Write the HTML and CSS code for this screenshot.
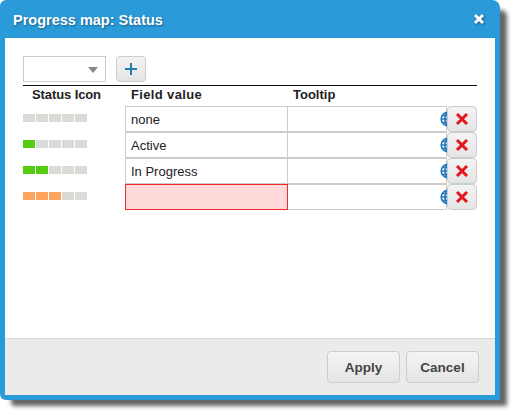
FILE: index.html
```html
<!DOCTYPE html>
<html>
<head>
<meta charset="utf-8">
<title>Progress map</title>
<link rel="stylesheet" href="styles.css">
</head>
<body>
<div class="dialog">
  <header class="titlebar">
    <span class="title">Progress map: Status</span>
    <svg class="close" width="12" height="12" viewBox="0 0 12 12"><path d="M2 2 10 10M10 2 2 10" stroke="#fff" stroke-width="3"/></svg>
  </header>
  <main class="content">
    <div class="toolbar">
      <div class="select"><span class="arrow"></span></div>
      <button class="btn add"><svg width="14" height="14" viewBox="0 0 14 14"><path d="M7 1V13M1 7H13" stroke="#1f7fb5" stroke-width="2"/></svg></button>
    </div>
    <div class="heads">
      <span class="head-icon">Status Icon</span>
      <span class="head-field">Field value</span>
      <span class="head-tip">Tooltip</span>
    </div>
    <div class="row">
      <div class="bars"><i></i><i></i><i></i><i></i><i></i></div>
      <div class="field">none</div>
      <div class="tip"><svg class="globe" width="16" height="16" viewBox="0 0 16 16"><g fill="none" stroke="#1a78c2" stroke-width="1.6"><circle cx="8" cy="8" r="6.8"/><ellipse cx="8" cy="8" rx="3" ry="6.8"/><path d="M1 8H15M2 4.500H14M2 11.500H14"/></g></svg></div>
      <button class="btn del"><svg width="14" height="14" viewBox="0 0 14 14"><path d="M2 2 12 12M12 2 2 12" stroke="#e8141c" stroke-width="3"/></svg></button>
    </div>
    <div class="row">
      <div class="bars"><i class="g"></i><i></i><i></i><i></i><i></i></div>
      <div class="field">Active</div>
      <div class="tip"><svg class="globe" width="16" height="16" viewBox="0 0 16 16"><g fill="none" stroke="#1a78c2" stroke-width="1.6"><circle cx="8" cy="8" r="6.8"/><ellipse cx="8" cy="8" rx="3" ry="6.8"/><path d="M1 8H15M2 4.500H14M2 11.500H14"/></g></svg></div>
      <button class="btn del"><svg width="14" height="14" viewBox="0 0 14 14"><path d="M2 2 12 12M12 2 2 12" stroke="#e8141c" stroke-width="3"/></svg></button>
    </div>
    <div class="row">
      <div class="bars"><i class="g"></i><i class="g"></i><i></i><i></i><i></i></div>
      <div class="field">In Progress</div>
      <div class="tip"><svg class="globe" width="16" height="16" viewBox="0 0 16 16"><g fill="none" stroke="#1a78c2" stroke-width="1.6"><circle cx="8" cy="8" r="6.8"/><ellipse cx="8" cy="8" rx="3" ry="6.8"/><path d="M1 8H15M2 4.500H14M2 11.500H14"/></g></svg></div>
      <button class="btn del"><svg width="14" height="14" viewBox="0 0 14 14"><path d="M2 2 12 12M12 2 2 12" stroke="#e8141c" stroke-width="3"/></svg></button>
    </div>
    <div class="row">
      <div class="bars"><i class="o"></i><i class="o"></i><i class="o"></i><i></i><i></i></div>
      <div class="field invalid"></div>
      <div class="tip"><svg class="globe" width="16" height="16" viewBox="0 0 16 16"><g fill="none" stroke="#1a78c2" stroke-width="1.6"><circle cx="8" cy="8" r="6.8"/><ellipse cx="8" cy="8" rx="3" ry="6.8"/><path d="M1 8H15M2 4.500H14M2 11.500H14"/></g></svg></div>
      <button class="btn del"><svg width="14" height="14" viewBox="0 0 14 14"><path d="M2 2 12 12M12 2 2 12" stroke="#e8141c" stroke-width="3"/></svg></button>
    </div>
  </main>
  <footer class="footer">
    <button class="btn action">Apply</button>
    <button class="btn action">Cancel</button>
  </footer>
</div>
</body>
</html>
```
FILE: styles.css
```css
* { box-sizing: border-box; }
html, body { margin: 0; padding: 0; background: #fff; }
body { min-height: 415px; font-family: "Liberation Sans", Arial, sans-serif; font-size: 13px; color: #222; }
.dialog {
  width: 500px; height: 400px;
  display: flex; flex-direction: column;
  background: #2a9ad8;
  border-radius: 6px 8px 0 6px;
  padding: 0 5px 5px;
  box-shadow: 9px 8px 4px -2px #666;
}
.titlebar {
  height: 38px; flex: none;
  display: flex; align-items: center; justify-content: space-between;
  padding: 2px 10px 0 8px;
}
.title { color: #fff; font-size: 14.5px; font-weight: bold; text-shadow: 1px 1px 2px #1a5f88; }
.close { margin-top: -3px; filter: drop-shadow(1px 1px 1px #1a5f88); }
.content { flex: 1; background: #fff; padding: 18px 18px 0; }
.toolbar { display: flex; gap: 10px; height: 29px; }
.select {
  width: 83px; height: 26px; border: 1px solid #ccc; background: #fff; position: relative;
}
.arrow {
  position: absolute; right: 7px; top: 10px;
  border-left: 5px solid transparent; border-right: 5px solid transparent; border-top: 6px solid #888;
}
.btn {
  border: 1px solid #ccc; border-radius: 4px;
  background: linear-gradient(#f4f4f4, #e4e4e4);
  padding: 0; display: flex; align-items: center; justify-content: center;
  font-family: inherit;
}
.add { width: 30px; height: 26px; }
.heads {
  border-top: 1px solid #111; height: 21px;
  display: grid; grid-template-columns: 102px 163px 1fr;
  font-size: 13px; font-weight: bold; color: #222; line-height: 16px; padding-top: 1px;
}
.head-icon { padding-left: 9px; letter-spacing: -0.1px; }
.head-field { padding-left: 6px; letter-spacing: 0.35px; }
.head-tip { padding-left: 5px; }
.row { display: flex; height: 26px; align-items: stretch; }
.bars { width: 102px; display: flex; gap: 1px; padding-top: 8px; }
.bars i { width: 12px; height: 8px; background: #dadad6; }
.bars i.g { background: #55cc11; }
.bars i.o { background: #ffa45c; }
.field {
  width: 163px; border: 1px solid #ccc; padding: 1px 5px 0;
  line-height: 24px; color: #222; background: #fff;
}
.field.invalid { background: #ffd9d9; border-color: #ee2a2a; }
.tip {
  width: 159px; border: 1px solid #ccc; border-left: 0; position: relative;
  display: flex; align-items: center; justify-content: flex-end;
}
.globe { margin-right: -10px; flex: none; }
.del { width: 30px; flex: none; position: relative; z-index: 1; }
.footer {
  height: 57px; flex: none;
  background: #ebebeb; border-top: 1px solid #d6d6d6;
  display: flex; justify-content: flex-end; align-items: flex-start; gap: 6px;
  padding: 12px 16px 0 0;
}
.action { width: 73px; height: 32px; font-size: 13.5px; font-weight: bold; color: #444; }
```
